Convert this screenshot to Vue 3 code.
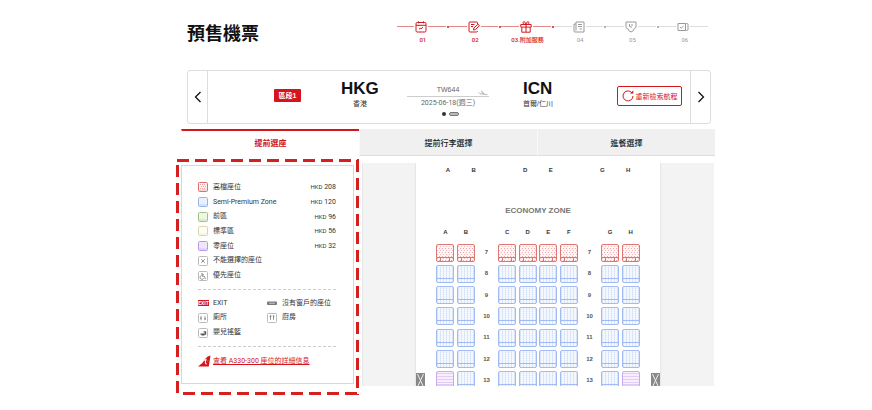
<script setup>
import { ref } from 'vue'

const steps = [
  { no: '01', icon: 'calendar', done: true },
  { no: '02', icon: 'edit', done: true },
  { no: '03.', name: '附加服務', icon: 'gift', done: true },
  { no: '04', icon: 'document', done: false },
  { no: '05', icon: 'shield', done: false },
  { no: '06', icon: 'ticket', done: false }
]

const tabs = ['提前選座', '提前行李選擇', '進餐選擇']
const activeTab = ref(0)

const zones = [
  { type: 'premium', name: '高檔座位', price: 208 },
  { type: 'semi', name: 'Semi-Premium Zone', price: 120 },
  { type: 'front', name: '前區', price: 96 },
  { type: 'standard', name: '標準區', price: 56 },
  { type: 'zero', name: '零座位', price: 32 },
  { type: 'blocked', name: '不能選擇的座位' },
  { type: 'priority', name: '優先座位' }
]

const facilities = [
  { type: 'exit', name: 'EXIT' },
  { type: 'nowindow', name: '沒有窗戶的座位' },
  { type: 'toilet', name: '廁所' },
  { type: 'galley', name: '廚房' },
  { type: 'bassinet', name: '嬰兒搖籃' }
]

const frontLetters = ['A', 'B', '', 'D', 'E', '', 'G', 'H']
const letters = ['A', 'B', '', 'C', 'D', 'E', 'F', '', 'G', 'H']
const rows = [7, 8, 9, 10, 11, 12, 13]

function seatType(row, letter) {
  if (row === 7) return 'premium'
  if (row === 13 && (letter === 'A' || letter === 'H')) return 'zero'
  return 'semi'
}
</script>

<template>
  <main class="page">
    <svg class="defs" aria-hidden="true">
      <defs>
        <pattern id="p-premium" width="3" height="4" patternUnits="userSpaceOnUse">
          <rect width="3" height="4" fill="#fff5f5" />
          <rect x="0" y="0" width="1" height="1" fill="#f2a9a9" />
          <rect x="1" y="2" width="1" height="1" fill="#f5baba" />
        </pattern>
        <pattern id="p-semi" width="3" height="2" patternUnits="userSpaceOnUse">
          <rect width="3" height="2" fill="#f3f7fe" />
          <rect x="1" width="1" height="1" fill="#d3dff7" />
          <rect x="1" y="1" width="1" height="1" fill="#e2eafa" />
        </pattern>
        <pattern id="p-zero" width="3" height="3" patternUnits="userSpaceOnUse">
          <rect width="3" height="3" fill="#f7effd" />
          <rect y="2" width="3" height="1" fill="#e3cdf8" />
        </pattern>
      </defs>
    </svg>

    <header class="head">
      <h1>預售機票</h1>
      <ol class="steps">
        <li v-for="s in steps" :key="s.no" :class="{ done: s.done }">
          <div class="track">
            <i class="line"></i>
            <svg viewBox="0 0 12 12" fill="none" stroke="currentColor">
              <g v-if="s.icon === 'calendar'">
                <rect x="1" y="1.5" width="10" height="9.5" rx="1.2" />
                <path d="M1 4.3h10M3.5.3v2M8.5.3v2M4 8.2l1.2-1 .8.6L8 6.300" />
              </g>
              <g v-else-if="s.icon === 'edit'">
                <path d="M9.500 3V2q0-1-1-1H2Q1 1 1 2v8q0 1 1 1h6.500q1 0 1-1M3 3.500h3.500M3 5.500h2" />
                <path d="M5.500 9l.4-2L10 3.300l1.500 1.400L7.400 8.600z" />
              </g>
              <g v-else-if="s.icon === 'gift'">
                <path d="M.8 3.500h10.400v2.600H.8zM1.800 6.300v4.900h8.400V6.300M6 3.500v7.500M6 3.500C2 3.500 2.500.5 4.200.7 5.300.8 6 3.500 6 3.500S6.700.8 7.800.7C9.500.5 10 3.500 6 3.500" />
              </g>
              <g v-else-if="s.icon === 'document'">
                <path d="M3 1h8v10H2Q1 11 1 10V3h2M3 1v8.500M5 3.500h4M5 5.500h4M6.500 8H9" />
              </g>
              <g v-else-if="s.icon === 'shield'">
                <path d="M2 7H1.500Q1 7 1 6V1h10v5q0 1-1 1M2.500 7q1 3.500 3.500 4 2.500-.5 3.500-4M4.500 3v2.500l2.500.8M7 3v2" />
              </g>
              <g v-else>
                <path d="M1 2.500h7.500v7H1zM8.500 2.500h1q1.500 0 1.500 1v5q0 1-1.500 1h-1M3 6l1.300 1.200L6.500 5" />
              </g>
            </svg>
            <i class="line"></i>
            <i class="dot"></i>
          </div>
          <span class="label">{{ s.no }}<span v-if="s.name">{{ s.name }}</span></span>
        </li>
      </ol>
    </header>

    <section class="flight">
      <button class="nav prev" aria-label="上一航段">
        <svg viewBox="0 0 8 12"><path d="M6.500 1L1.500 6l5 5" /></svg>
      </button>
      <div class="info">
        <span class="badge">區段1</span>
        <div class="city">
          <strong>HKG</strong>
          <span>香港</span>
        </div>
        <div class="route">
          <span class="no">TW644</span>
          <svg class="plane" viewBox="0 0 12 7"><path d="M0 6h11.500M1 2l2 2.300 7 .9q1 0 .5-.8L7.500 3.800 4.500.5l-.8.1 1.500 2.800L2.500 3 1.500 1.800z" /></svg>
          <span class="date">2025-06-18(週三)</span>
          <span class="pager"><i></i><i></i></span>
        </div>
        <div class="city arrive">
          <strong>ICN</strong>
          <span>首爾/仁川</span>
        </div>
        <button class="again">
          <svg viewBox="0 0 12 12"><path class="arc" d="M10.200 3.200A5 5 0 1 0 11 6" /><path class="tip" d="M7.700 3.600h3.600V.4z" /></svg>
          重新檢索航程
        </button>
      </div>
      <button class="nav next" aria-label="下一航段">
        <svg viewBox="0 0 8 12"><path d="M1.500 1l5 5-5 5" /></svg>
      </button>
    </section>

    <nav class="tabs">
      <button v-for="(t, i) in tabs" :key="t" :class="{ active: i === activeTab }" @click="activeTab = i">{{ t }}</button>
    </nav>

    <div class="body">
      <aside class="highlight">
        <div class="panel">
          <ul class="zones">
            <li v-for="z in zones" :key="z.type">
              <svg class="key" :class="z.type" viewBox="0 0 10 10">
                <rect class="frame" x=".5" y=".5" width="9" height="9" rx="1" />
                <path v-if="z.type === 'premium'" class="dots" d="M2 2.500h6M3 4.500h5M2 6.500h6" />
                <path v-if="z.price" class="base" d="M1 8h8" />
                <path v-if="z.type === 'blocked'" class="mark" d="M3.200 3.200l3.600 3.600M6.800 3.200L3.200 6.800" />
                <path v-if="z.type === 'priority'" class="mark" d="M4 1.800v3.400h2.200L7.500 8M4 3.700h2M3.200 4.500a2 2 0 1 0 2.600 2.700" />
              </svg>
              <span>{{ z.name }}</span>
              <span v-if="z.price" class="price"><small>HKD</small> {{ z.price }}</span>
            </li>
          </ul>
          <ul class="facilities">
            <li v-for="f in facilities" :key="f.type">
              <b v-if="f.type === 'exit'" class="exit">EXIT</b>
              <svg v-else class="key" :class="f.type" viewBox="0 0 10 10">
                <template v-if="f.type === 'nowindow'">
                  <rect x="0" y="3.500" width="10" height="3.500" rx="1" fill="#777" />
                  <path d="M2 5.200h6" stroke="#ccc" />
                </template>
                <template v-else>
                  <rect class="frame" x=".5" y=".5" width="9" height="9" rx="1" />
                  <path v-if="f.type === 'toilet'" class="mark" d="M3 2.800v1M3 4.200v3M2 5h2M7 2.800v1M7 4.200v3M6 5.800h2" />
                  <path v-else-if="f.type === 'galley'" class="mark" d="M3.500 2.200v4.600M2.500 3.300h2M6.500 2.200v4.600M5.800 3.300h1.600" />
                  <path v-else class="mark bold" d="M2.500 6.200h5V3.800H5.600M3.500 6.800h3" />
                </template>
              </svg>
              <span>{{ f.name }}</span>
            </li>
          </ul>
          <div class="more">
            <svg viewBox="0 0 13 14">
              <path fill="#d4151c" d="M0 11.500Q5 8.500 7.500 3.500 9.500 1 12.500.5L10.800 11.500z" />
              <path fill="none" stroke="#fff" d="M6.300 5.500l2.200-.7M7.900 3.800L7.300 8q0 1.300 1.500.9" />
              <path fill="#6f9a2f" d="M9.200 5l1.600.8L9.600 7.200z" />
            </svg>
            <a href="#seats">查看 A330-300 座位的詳細信息</a>
          </div>
        </div>
      </aside>

      <section id="seats" class="map">
        <div class="cabin">
          <div class="letters front"><span v-for="(l, i) in frontLetters" :key="i">{{ l }}</span></div>
          <h2>ECONOMY ZONE</h2>
          <div class="letters"><span v-for="(l, i) in letters" :key="i">{{ l }}</span></div>
          <div class="rows">
            <div v-for="r in rows" :key="r" class="row">
              <template v-for="(l, i) in letters" :key="i">
                <button v-if="l" class="seat" :aria-label="r + l">
                  <svg viewBox="0 0 18 18" :class="seatType(r, l)">
                    <rect class="frame" x=".5" y=".5" width="17" height="17" rx="1.500" :fill="`url(#p-${seatType(r, l)})`" />
                    <path class="base" d="M1 13.500h16" />
                    <path v-if="r === 7" class="base" d="M4.500 14v3M13.500 14v3" />
                  </svg>
                </button>
                <span v-else class="num">{{ r }}</span>
              </template>
            </div>
          </div>
          <svg class="door left" viewBox="0 0 9 16"><rect width="9" height="16" /><path d="M1.500 1l6 13M7.500 1l-6 13" /></svg>
          <svg class="door right" viewBox="0 0 9 16"><rect width="9" height="16" /><path d="M1.500 1l6 13M7.500 1l-6 13" /></svg>
        </div>
      </section>
    </div>
  </main>
</template>

<style>
body {
  margin: 0;
  background: #fff;
}
</style>

<style scoped>
.page {
  padding: 0 156px 14px 176px;
  font-family: "Liberation Sans", "Noto Sans CJK TC", sans-serif;
  font-size: 7px;
  line-height: 9px;
  color: #333;
}
.page * { box-sizing: border-box; }
.defs { position: absolute; width: 0; height: 0; }
svg { display: block; flex: none; }
ul, ol { list-style: none; margin: 0; padding: 0; }
button {
  font: inherit;
  color: inherit;
  background: none;
  border: 0;
  padding: 0;
  cursor: pointer;
}

.head {
  display: flex;
  justify-content: space-between;
  align-items: flex-start;
  height: 70px;
  padding: 20px 5px 0 11px;
}
h1 {
  margin: 2px 0 0;
  font-size: 18px;
  line-height: 25px;
  color: #111;
}
.steps {
  display: grid;
  grid-template-columns: repeat(6, 1fr);
  width: 60%;
  color: #999;
}
.steps .done { color: #d4151c; }
.track {
  display: flex;
  align-items: center;
  height: 13px;
}
.track svg { width: 12px; height: 12px; margin: 0 1px; }
.line {
  flex: 1;
  height: 1px;
  background: #ddd;
}
.done .line { background: #e08a8a; }
.dot {
  width: 2px;
  height: 2px;
  margin-left: 1px;
  border-radius: 1px;
  background: currentColor;
}
.steps li:last-child .dot { visibility: hidden; }
.label {
  display: flex;
  justify-content: center;
  margin-top: 2px;
  font-family: Roboto, "Noto Sans CJK TC", sans-serif;
  font-size: 6px;
  line-height: 9px;
  white-space: nowrap;
}
.done .label { font-weight: 500; }

.flight {
  display: grid;
  grid-template-columns: 20px 1fr 20px;
  height: 54px;
  margin: 0 5px 0 11px;
  border: 1px solid #ddd;
  border-radius: 3px;
}
.nav {
  display: flex;
  align-items: center;
  justify-content: center;
}
.nav svg {
  width: 8px;
  height: 12px;
  fill: none;
  stroke: #111;
  stroke-width: 1.3;
}
.prev { border-right: 1px solid #ddd; }
.next { border-left: 1px solid #ddd; }
.info {
  display: grid;
  grid-template-columns: 67fr 66fr 116fr 94fr 65px;
  justify-items: start;
  align-items: start;
  padding: 8px 8px 0 66px;
}
.badge {
  width: 27px;
  margin-top: 10px;
  border-radius: 1px;
  background: #d4151c;
  color: #fff;
  font-weight: bold;
  line-height: 13px;
  text-align: center;
}
.city { text-align: center; }
.city.arrive { text-align: left; }
.city strong {
  display: block;
  font-size: 17px;
  line-height: 20px;
  color: #111;
}
.city span { display: block; }
.route {
  position: relative;
  width: 82px;
  padding-top: 6px;
  text-align: center;
  color: #666;
}
.no {
  display: block;
  padding-bottom: 2px;
  border-bottom: 1px solid #ccc;
}
.plane {
  position: absolute;
  right: 0;
  top: 11px;
  width: 12px;
  height: 7px;
  fill: #bbb;
}
.date {
  display: block;
  padding-top: 2px;
  font-family: Roboto, "Noto Sans CJK TC", sans-serif;
  white-space: nowrap;
}
.pager {
  display: flex;
  justify-content: center;
  gap: 3px;
  margin-top: 4px;
  padding-left: 4px;
}
.pager i {
  width: 4px;
  height: 4px;
  border-radius: 2px;
  background: #333;
}
.pager i + i {
  width: 10px;
  border: 1px solid #777;
  background: #bbb;
}
.again {
  display: flex;
  align-items: center;
  justify-content: center;
  gap: 2px;
  width: 65px;
  height: 20px;
  margin-top: 7px;
  border: 1px solid #d4151c;
  border-radius: 2px;
  color: #d4151c;
  white-space: nowrap;
}
.again svg { width: 12px; height: 12px; }
.arc { fill: none; stroke: #d4151c; }
.tip { fill: #d4151c; }

.tabs {
  display: grid;
  grid-template-columns: repeat(3, 1fr);
  margin: 5px 1px 0 5px;
}
.tabs button {
  height: 27px;
  border-top: 2px solid #f0f0f0;
  border-bottom: 1px solid #ddd;
  border-left: 1px solid #fafafa;
  background: #f0f0f0;
  font-size: 8px;
  font-weight: 500;
  color: #222;
}
.tabs .active {
  border-color: #d4151c #fff #fff;
  background: #fff;
  color: #d4151c;
  font-weight: bold;
}

.body {
  display: grid;
  grid-template-columns: 183fr 357fr;
  align-items: start;
  margin-top: 3px;
}
.highlight {
  --dash: #d6201f;
  padding: 6px 5px 11px;
  background:
    repeating-linear-gradient(90deg, var(--dash) 0 12px, transparent 12px 18px) 1px 0 / 100% 3px no-repeat,
    repeating-linear-gradient(90deg, transparent 0 6px, var(--dash) 6px 18px) 1px 100% / 100% 3px no-repeat,
    repeating-linear-gradient(180deg, transparent 0 6px, var(--dash) 6px 18px) 0 0 / 3px 100% no-repeat,
    repeating-linear-gradient(180deg, var(--dash) 0 12px, transparent 12px 18px) 100% 1px / 3px 100% no-repeat;
}
.panel {
  padding: 14px 17px 14px 16px;
  border: 1px solid #d8d8d8;
  font-family: Roboto, "Noto Sans CJK TC", sans-serif;
}
.zones, .facilities { display: grid; }
.zones {
  grid-template-rows: repeat(7, 1fr);
  height: 103px;
}
.zones li, .facilities li {
  display: flex;
  align-items: center;
  gap: 5px;
  white-space: nowrap;
}
.price { margin-left: auto; }
.price small { font-size: 6px; }
.facilities {
  grid-template-columns: 1fr 1fr;
  grid-template-rows: repeat(3, 1fr);
  height: 58px;
  margin-top: 6px;
  padding: 6px 0;
  border: dashed #ccc;
  border-width: 1px 0;
}
.key { width: 10px; height: 10px; fill: none; }
.key .frame { stroke: #bbb; }
.key .base { opacity: 0.4; }
.key .mark { stroke: #777; stroke-width: 0.8; }
.key .bold { stroke-width: 1.3; stroke: #555; }
.key.premium { stroke: #d96060; }
.key.premium .frame { stroke: #de7070; fill: #fff0f0; }
.key.premium .dots { stroke: #efa5a5; stroke-dasharray: 1 1; }
.key.semi { stroke: #8fabe8; }
.key.semi .frame { stroke: #9ab4ea; fill: #eaf1fd; }
.key.front { stroke: #8fc06c; }
.key.front .frame { stroke: #9cc67e; fill: #eef7e8; }
.key.standard { stroke: #ddd6a8; }
.key.standard .frame { stroke: #dcd5ac; fill: #fffef6; }
.key.zero { stroke: #b493ea; }
.key.zero .frame { stroke: #b898ec; fill: #efe6fc; }
.exit {
  width: 11px;
  margin-right: -1px;
  background: #d4151c;
  color: #fff;
  font-size: 5px;
  line-height: 6px;
  text-align: center;
}
.more {
  display: flex;
  align-items: center;
  gap: 2px;
  height: 15px;
  margin-top: 7px;
  white-space: nowrap;
}
.more svg { width: 13px; height: 14px; }
.more a { color: #d4151c; text-underline-offset: 1px; }

.map {
  height: 223px;
  margin: 4px 2px 0 3px;
  padding: 0 54px 0 53px;
  overflow: hidden;
  background: #f3f3f3;
  border-left: 1px solid #e6e6e6;
}
.cabin {
  position: relative;
  height: 100%;
  padding: 3px 19px 0;
  background: #fff;
  box-shadow: 0 0 2px #ccc;
}
.letters {
  display: grid;
  grid-template-columns: repeat(10, 1fr);
  font-size: 6px;
  font-weight: bold;
  line-height: 8px;
  text-align: center;
}
.letters.front { grid-template-columns: repeat(8, 1fr); }
h2 {
  margin: 32px 0 12px;
  font-size: 8px;
  line-height: 10px;
  text-align: center;
  color: #777;
}
.rows {
  display: grid;
  grid-template-rows: repeat(7, 1fr);
  height: 149px;
  margin-top: 6px;
}
.row {
  display: grid;
  grid-template-columns: repeat(10, 1fr);
  align-items: center;
  justify-items: center;
}
.seat svg { width: 18px; height: 18px; }
.seat .frame, .seat .base { stroke: #a3bbf3; }
.seat .base { fill: none; }
.seat .premium .frame, .seat .premium .base { stroke: #de7676; }
.seat .zero .frame { stroke: #c9a8ef; }
.seat .zero .base { stroke: #dfc9f7; }
.num {
  font-size: 6px;
  font-weight: bold;
  color: #555;
}
.door {
  position: absolute;
  top: 210px;
  width: 9px;
  height: 16px;
  fill: #888;
}
.door path { fill: none; stroke: #eee; }
.left { left: 0; }
.right { right: 0; }
</style>
